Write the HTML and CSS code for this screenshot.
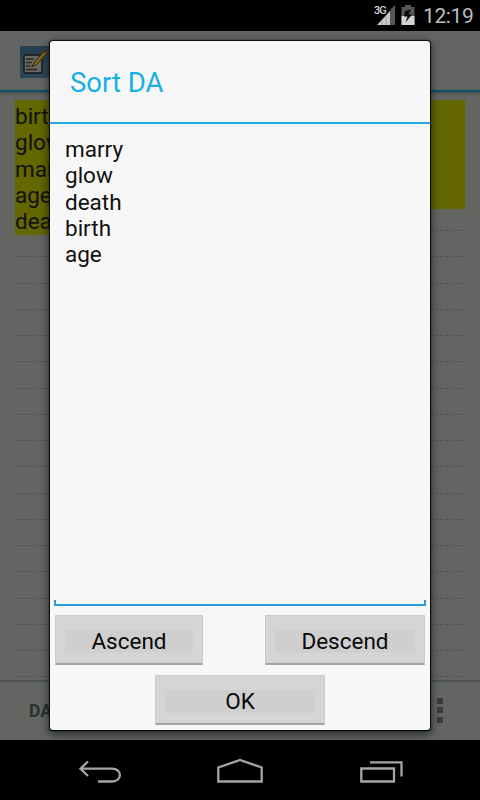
FILE: index.html
```html
<!DOCTYPE html>
<html lang="en">
<head>
<meta charset="utf-8">
<title>Sort DA</title>
<link rel="stylesheet" href="styles.css">
</head>
<body>
<div class="phone">
  <header class="status">
    <svg class="signal" width="18" height="20" viewBox="0 0 18 20">
      <path d="M13 5 18 0V20H13Z" fill="#555755"/>
      <path d="M0 20 13 6V20Z" fill="#c9c9c9"/>
      <path d="M5 15V20M9 11V20" stroke="#8c8c8c" stroke-width=".7"/>
    </svg>
    <span class="network">3G</span>
    <svg class="battery" width="14" height="20" viewBox="0 0 14 20">
      <path d="M4 0H10V2H13.500V20H.5V2H4Z" fill="#555755"/>
      <path d="M.5 11H13.500V20H.5Z" fill="#d4d4d4"/>
      <path d="M10 4.500 4 6 3 11.500H6.500L4.500 17.500 11 9.500H7.500Z" fill="#080808"/>
    </svg>
    <span class="clock">12:19</span>
  </header>
  <div class="appbar">
    <svg width="32" height="32" viewBox="0 0 32 32">
      <rect width="32" height="32" rx="2" fill="#27404f"/>
      <rect y="16" width="32" height="16" rx="2" fill="#2d4657"/>
      <rect x="4" y="9" width="18" height="18" rx="1" fill="#666862" stroke="#171918" stroke-width="1.500"/>
      <path d="M6 13H14M6 16.500H12M6 20H10M6 23.500H17" stroke="#272927" stroke-width="1.300"/>
      <path d="M11.500 21 14 17 24 5 27 7.500 16 19Z" fill="#806710" stroke="#292616"/>
      <path d="M24 5 26 3 29 6 27 8Z" fill="#593630"/>
    </svg>
  </div>
  <main class="sheet">
    <div class="column left">birth<br>glow<br>marry<br>age<br>death</div>
    <div class="column right"></div>
  </main>
  <footer class="toolbar">
    <span class="tool">DA</span>
    <span class="more"><i></i><i></i><i></i></span>
  </footer>
  <nav class="navbar">
    <svg width="360" height="60" viewBox="0 0 360 60" fill="none" stroke="#a5a5a5" stroke-width="2.300">
      <path d="M28 21.500 20.500 28.700 28 36M21 28.700H52C62.500 28.700 62.500 41.500 52 41.500H38"/>
      <path d="M158.300 41.500V27.500L180 20 201.700 27.500V41.500Z"/>
      <path d="M301.300 28.500H334V41.500H301.300ZM310 22.300H341.500V36.500"/>
    </svg>
  </nav>
  <section class="dialog">
    <h1 class="title">Sort DA</h1>
    <div class="editor">marry<br>glow<br>death<br>birth<br>age</div>
    <div class="row">
      <button class="btn ascend"><span>Ascend</span></button>
      <button class="btn descend"><span>Descend</span></button>
    </div>
    <div class="row center">
      <button class="btn ok"><span>OK</span></button>
    </div>
  </section>
</div>
</body>
</html>
```
FILE: styles.css
```css
* { box-sizing: border-box; }
body {
  margin: 0;
  font-family: Roboto, "Liberation Sans", sans-serif;
  font-size: 22.5px;
  color: #111;
}
.phone {
  position: relative;
  display: flex;
  flex-direction: column;
  width: 480px;
  height: 800px;
  overflow: hidden;
  background: #636563;
}
.status {
  position: relative;
  display: flex;
  flex: 0 0 31px;
  justify-content: flex-end;
  align-items: flex-start;
  padding: 5px 7px 0 0;
  background: #000;
  color: #bdbdbd;
}
.signal { margin-right: 6px; }
.network {
  position: absolute;
  left: 374px;
  top: 4px;
  font-size: 11px;
  line-height: 13px;
  font-weight: 500;
  letter-spacing: -1px;
  color: #d0d0d0;
}
.battery { margin-right: 8px; }
.clock {
  width: 50px;
  font-size: 21px;
  line-height: 23px;
  letter-spacing: -.4px;
  white-space: nowrap;
}
.appbar {
  flex: 0 0 61px;
  padding: 15px 20px 0;
  border-bottom: 2px solid #07506f;
}
.appbar svg { display: block; }
.sheet {
  display: flex;
  justify-content: space-between;
  align-items: flex-start;
  flex: 1;
  padding: 8px 15px 0;
  background:
    repeating-linear-gradient(90deg, #0000 0 3px, #636563 3px 5px),
    repeating-linear-gradient(#0000 0 25.25px, #505250 25.25px 26.25px) 15px 7.500px / 450px 579px no-repeat;
  box-shadow: inset 0 3px 3px -1px #505250;
}
.column { background: #646600; line-height: 26.25px; }
.left { width: 200px; height: 135px; padding-top: 3px; }
.right { width: 200px; height: 109px; }
.toolbar {
  display: flex;
  justify-content: space-between;
  align-items: center;
  flex: 0 0 60px;
  padding: 0 37px 2px 29px;
  border-top: 2px solid #505450;
  background: #636563;
}
.tool { padding-top: 2px; font-size: 17.5px; font-weight: 700; color: #2d302d; }
.more { display: grid; gap: 3.5px; }
.more i { width: 6px; height: 6px; background: #393c39; }
.navbar { flex: 0 0 60px; padding-left: 60px; background: #000; }
.navbar svg { display: block; }
.dialog {
  position: absolute;
  left: 50px;
  top: 41px;
  width: 380px;
  height: 689px;
  border-radius: 3px;
  background: #f7f7f7;
  box-shadow: 0 1px 1px 0 #000, 0 0 1px 1px #080a08, 0 3px 9px 2px rgba(10, 20, 10, .6);
}
.title {
  height: 83px;
  margin: 0;
  padding-left: 20px;
  border-bottom: 2px solid #20abdc;
  font-size: 27.5px;
  font-weight: 400;
  line-height: 84px;
  color: #15b0e4;
}
.editor {
  position: relative;
  height: 482px;
  margin: 0 4px;
  padding: 12px 11px;
  border-bottom: 2px solid #269bd4;
  line-height: 26.25px;
}
.editor::before, .editor::after {
  content: "";
  position: absolute;
  bottom: 0;
  width: 2px;
  height: 4px;
  background: #269bd4;
}
.editor::before { left: 0; }
.editor::after { right: 0; }
.row { display: flex; justify-content: space-between; padding: 9px 5px 0; }
.row.center { justify-content: center; padding-top: 10px; }
.btn {
  height: 50px;
  padding: 14px 9px 11px;
  border: 1px solid #cbcbcb;
  border-bottom: 2px solid #a5a3a5;
  border-radius: 1px;
  background: #d6d4d6;
  font: inherit;
  color: #0a0a0a;
}
.btn span { display: block; height: 23px; line-height: 22px; background: #cfcfcf; }
.ascend { width: 148px; }
.descend { width: 160px; }
.ok { width: 170px; }
```
